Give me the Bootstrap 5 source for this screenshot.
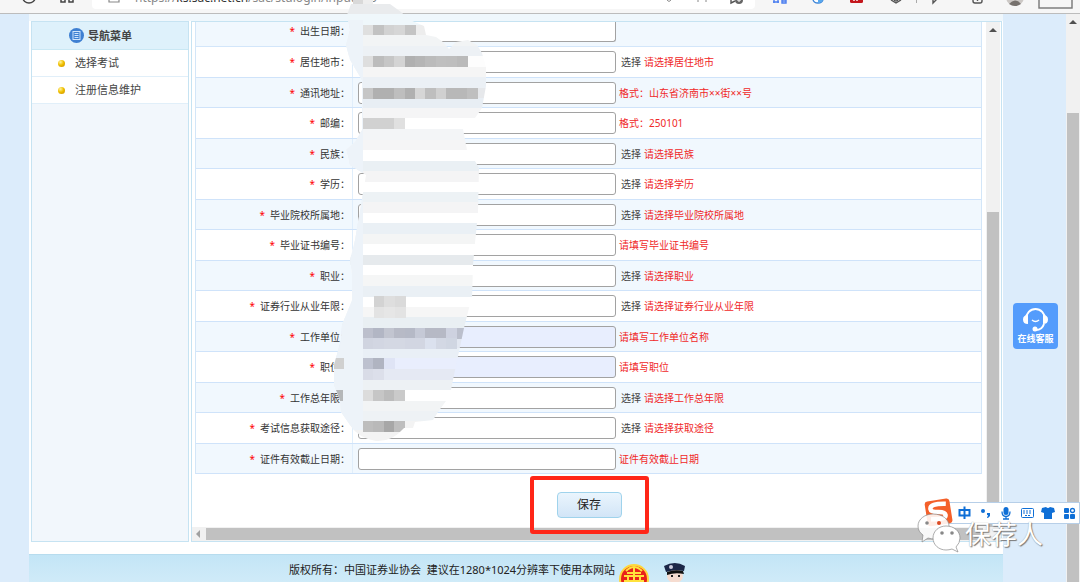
<!DOCTYPE html>
<html lang="zh-CN">
<head>
<meta charset="utf-8">
<meta name="viewport" content="width=device-width, initial-scale=1">
<title>注册信息维护</title>
<link href="https://cdn.jsdelivr.net/npm/bootstrap@5.3.0/dist/css/bootstrap.min.css" rel="stylesheet">
<style>
body{font-family:"Noto Sans","Noto Sans CJK SC",sans-serif;font-size:10px;line-height:16px;color:#333;background:#dcecfb;overflow:hidden}
a{text-decoration:none}
.chrome-bar{height:14px;background:#f6f6f6;border-bottom:1px solid #bcbcbc}
.omnibox{margin-left:92px;margin-right:325px;height:9px;background:#fff;border-radius:0 0 4px 4px;color:#888;font-size:12px}
.omnibox span{line-height:16px;margin-left:43px;margin-top:-10px}
.omnibox b{font-weight:400;color:#333}
.chrome-icons{left:0;top:0}
.chrome-icons-end{right:0;top:0}
.site{margin-left:29px;margin-right:77px;background:#fff}
.panels{padding:7px 1px 0 2px;gap:2px;background:linear-gradient(#eff7fc 7px,#fff 7px)}
.side{width:158px;border:1px solid #c6e3f2;background:#f2f7fc;font-size:11px}
.side-head{height:28px;background:#def1fb;border-bottom:1px solid #c9e8f4;color:#444;padding-left:37px;gap:4px}
.side-link{height:27px;background:#fff;border-bottom:1px solid #e1eff9;color:#444;padding-left:26px;gap:10px}
.ball{width:7px;height:7px;border-radius:50%;background:radial-gradient(circle at 35% 30%,#fff3a0,#f0c000 45%,#c88a00)}
.work{border:1px solid #c6e3f2;background:#fff;min-width:0}
.sheet{margin:0 4px 0 3px;border:solid #d3e6f8;border-width:0 1px}
.line{height:30px;border-bottom:1px solid #cfe3fa;background:#fff}
.line:nth-child(even){height:31px}
.line:nth-child(odd){background:#f1f8fe}
.line:first-child{height:25px;border-color:#d3e6fa}
.line:first-child .field{height:20px;border-top:0;border-radius:0 0 3px 3px;margin-bottom:4px}
.line:first-child .caption{padding-bottom:6px}
.caption{width:157px;border-right:1px solid #e0eefb;padding-right:2px}
.star{color:#f00;margin-right:5px}
.field{width:258px;height:22px;margin-left:5px;border:1px solid #a2a2a2;border-radius:3px;background:#fff;padding:0 4px;font-size:10px}
.field.filled{background:#e8eefe}
.pick{color:#444;margin-left:5px}
.hint{color:#f02828;margin-left:3px}
.save-zone{padding:18px 0 9px}
.save{width:65px;height:26px;border:1px solid #9fd3ec;border-radius:4px;background:linear-gradient(#eaf5fd,#d2e5f7);font-size:12px;color:#222;padding:0}
.ring{inset:-16px -27px;border:4px solid #ff2618;border-radius:3px;pointer-events:none;z-index:2}
.vtrack,.otrack{width:14px;background:#f1f1f1}
.otrack{top:14px;right:0;bottom:0;padding:99px 1px 0}
.vtrack{padding:190px 1px 0;margin-right:1px}
.htrack{height:14px;background:#f1f1f1;padding:1px 18px 1px 14px}
.thumb{background:#c1c1c1}
.arrow-u{border:4px solid transparent;border-top:0;border-bottom:4px solid #505050;left:3px;top:6px}
.arrow-l{border:4px solid transparent;border-left:0;border-right:4px solid #a0a0a0;left:4px;top:3px}
.foot{margin-top:12px;height:100px;background:linear-gradient(#c3e5f6,#dff2fb 60px);border-top:1px solid #b7dcee;padding:7px 0 0 260px;font-size:11px;color:#222}
.mask{left:330px;top:0}
.help{right:22px;top:303px;width:45px;height:46px;border:0;border-radius:4px;background:#549cfc;color:#fff;font-size:9px;font-weight:700;line-height:12px}
.ime{right:0;top:502px;width:135px;height:22px;background:#fff;border:1px solid #b7cfe8}
.mark-name{left:965px;top:516px;font-size:26px;line-height:36px;color:#fff;text-shadow:1px 1px 1px #777,0 0 1px #999}
.overlay-svg{left:910px;top:490px}
</style>
</head>
<body>
<div class="position-relative vh-100 overflow-hidden">
  <header class="chrome-bar position-relative overflow-hidden">
    <div class="omnibox d-flex align-items-start"><span>https://<b>ks.sac.net.cn</b>/sac/stulogin/inputinfo</span></div>
    <svg class="chrome-icons position-absolute" width="130" height="13" fill="none" stroke="#444" stroke-width="1.5">
      <path d="M23 -2a6 5 0 0 0 12 0M61 -3v5h4v-5M69 -3v5h4v-5"/><path d="M109 -4v6h10v-6" stroke="#888" stroke-width="1.2"/>
    </svg>
    <svg class="chrome-icons-end position-absolute" width="420" height="13" fill="none" stroke="#555" stroke-width="1.4">
      <path d="M7 0q2 3 4 0M38 0v2M46 0v2" stroke="#888" stroke-width="1"/>
      <path d="M71 0v3l4-2"/><circle cx="79" cy="0" r="4" fill="#666" stroke="none"/><path d="M77 0h4M79 -2v4" stroke="#fff" stroke-width="1"/>
      <path d="M114 0v3M118 0v3M113 2h6M122 0v3h4v-3M122 1h4" stroke="#4a7df0"/>
      <path d="M153 -1a5 4 0 0 0 10 0" fill="#fff" stroke="#3c84d8"/><path d="M158 3a5 4 0 0 0 5-4h-5z" fill="#58a8ee" stroke="none"/>
      <rect x="190" y="-8" width="13" height="11" rx="1.500" fill="#c4161c" stroke="none"/><path d="M194 1v-2M197 1v-2h3" stroke="#fff"/>
      <path d="M231 0l5 3 5-3"/><circle cx="236" cy="-1" r="2"/><path d="M256.500 0v3" stroke="#aaa" stroke-width="1"/><path d="M273 -3v6l5-5"/>
      <rect x="313" y="-6" width="9" height="9" rx="2"/><path d="M317.500 -2v3"/>
      <circle cx="355" cy="-3" r="9" fill="#ccc8c5" stroke="none"/><path d="M349 4q6-7 12 0-6 4-12 0z" fill="#77726e" stroke="none"/>
      <rect x="379" y="-8" width="33" height="16" stroke="#777"/>
    </svg>
  </header>

  <div class="site">
    <div class="panels d-flex">
      <nav class="side flex-shrink-0">
        <div class="side-head d-flex align-items-center fw-bold">
          <svg width="15" height="15"><circle cx="7.500" cy="7.500" r="7.500" fill="#3f80d2"/><rect x="4" y="3.500" width="7" height="8" fill="none" stroke="#cfe4fb"/><path d="M5.500 5.500h4M5.500 7.500h4M5.500 9.500h4" stroke="#cfe4fb"/></svg>导航菜单
        </div>
        <a href="#" class="side-link d-flex align-items-center"><span class="ball"></span>选择考试</a>
        <a href="#" class="side-link d-flex align-items-center"><span class="ball"></span>注册信息维护</a>
      </nav>
      <main class="work flex-grow-1">
        <div class="d-flex">
          <form class="flex-grow-1">
            <div class="sheet" id="sheet"></div>
            <div class="save-zone d-flex justify-content-center">
              <div class="position-relative"><button type="button" class="save d-block">保存</button><span class="ring position-absolute"></span></div>
            </div>
          </form>
          <div class="vtrack position-relative d-flex"><i class="arrow-u position-absolute"></i><div class="thumb flex-grow-1"></div></div>
        </div>
        <div class="htrack position-relative d-flex"><i class="arrow-l position-absolute"></i><div class="thumb flex-grow-1"></div></div>
      </main>
    </div>
    <footer class="foot d-flex align-items-start">
      <span class="text-nowrap">版权所有：中国证券业协会&nbsp; 建议在1280*1024分辨率下使用本网站</span>
      <svg width="80" height="36" class="flex-shrink-0">
        <circle cx="19" cy="17" r="14" fill="#e9221a" stroke="#ffd83a" stroke-width="2"/><path d="M11 9q8-8 16 0M9 14h20M12 11h14M19 5v16M13 14v5M25 14v5M9 19h20" fill="none" stroke="#ffe23c" stroke-width="2"/>
        <ellipse cx="60" cy="14" rx="8" ry="7" fill="#f6dcd0"/><path d="M49 4q11-6 21 0l-1 5q-9-2-18 1z" fill="#1b2647"/><path d="M52 10q8-3 16-1l1 3q-9-2-17 1z" fill="#111"/><circle cx="56" cy="5" r="2" fill="#ccd"/><path d="M56 14h2M63 14h2" stroke="#222" stroke-width="2"/><path d="M49 26q10-10 22 0z" fill="#26345f"/>
      </svg>
    </footer>
  </div>

  <div class="otrack position-absolute d-flex"><i class="arrow-u position-absolute"></i><div class="thumb flex-grow-1"></div></div>

  <svg class="mask position-absolute" id="mask" width="160" height="450" viewBox="330 0 160 450" shape-rendering="crispEdges">
    <clipPath id="smear"><path d="M351 4H390L401 12 410 20 424 26 426 35 436 37 443 42 449 49 456 42 468 40 477 45 482 53 486 67 486 86 482 108 475 118 463 118 463 129 467 150 461 150V161H475L479 168 478 213 475 243 473 265 472 300 469 308 464 328 454 375 451 390 446 401 438 412 433 420 415 422 413 428 404 428Q392 442 376 441 358 438 350 425L341 412 340 400 334 385V365L341 340 342 325 352 300V275L350 260 355 240 361 205 366 175 350 165 346 150 355 142 362 130V80L350 60 346 45 350 30 347 15Z"/></clipPath>
    <g id="bands" clip-path="url(#smear)"></g>
    <path d="M353 0h10v4h-10z" fill="#d9d9d9"/><path d="M363 0h10v4h-10z" fill="#eee"/>
  </svg>

  <button type="button" class="help position-absolute d-flex flex-column align-items-center p-0 pt-1">
    <svg width="27" height="26" fill="none" stroke="#fff" stroke-width="2"><path d="M4 12a9.500 10 0 0 1 19 0M22 17q-2 6-8 6"/><path d="M6 8v9q-5 0-5-4.500T6 8zM21 8v9q5 0 5-4.500T21 8z" fill="#fff" stroke="none"/><path d="M10 13q3.500 3 7 0" stroke-width="1.500"/><circle cx="13" cy="22" r="2.500" fill="#fff" stroke="none"/></svg>
    <span class="text-nowrap">在线客服</span>
  </button>

  <div class="ime position-absolute"></div>
  <svg class="overlay-svg position-absolute" width="170" height="65" viewBox="910 490 170 65">
    <g transform="rotate(-9 938 512)"><rect x="926" y="500" width="25" height="25" rx="3" fill="#f4602a"/><path d="M947 505q-16-3-16 3 0 3 7 4t7 4q0 5-15 2" fill="none" stroke="#fff" stroke-width="4.500"/></g>
    <g fill="none" stroke="#0f6fd6" stroke-width="2"><path d="M959.500 510h10v5.500h-10zM964.500 506.500v12.500"/></g>
    <g fill="#0f6fd6"><circle cx="983" cy="511" r="2"/><path d="M987 513h3v3l-2 2h-1l1-3h-1z"/>
      <rect x="1003.500" y="507" width="5" height="8" rx="2.500"/><path d="M1002 511.500q0 5 4 5t4-5M1006 516v3M1003 519h6" fill="none" stroke="#0f6fd6" stroke-width="1.300"/>
      <path d="M1042 508l4-1q2 2 4 0l4 1 1 4-3 1v6h-8v-6l-3-1z"/>
      <rect x="1064" y="508" width="5" height="5" rx="1"/><rect x="1064" y="514" width="5" height="5" rx="1"/><rect x="1070" y="514" width="5" height="5" rx="1"/><circle cx="1072.500" cy="510.500" r="2" fill="none" stroke="#0f6fd6" stroke-width="1.300"/></g>
    <rect x="1021.500" y="508.500" width="12" height="9" rx="1" fill="none" stroke="#0f6fd6"/><path d="M1023 511h9M1023 513h9M1025 515.500h5" stroke="#0f6fd6" stroke-dasharray="2 1"/>
    <g stroke="#8a8a8a" stroke-width=".7"><path d="M933 514c-8 0-15 5-15 12 0 4 2 7 5 9l-1 7 6-4q3 1 7 1c8 0 14-6 14-13s-7-12-16-12z" fill="#fff" fill-opacity=".88"/><path d="M946 526c-7 0-13 5-13 12s6 12 13 12q3 0 6-1l6 3-2-5q4-4 4-9c0-7-6-12-14-12z" fill="#fff"/></g>
    <g fill="#888"><circle cx="927" cy="523" r="1.800"/><circle cx="942" cy="533" r="1.800"/><circle cx="952" cy="533" r="1.800"/></g><circle cx="939" cy="523" r="2" fill="#dc4a22"/>
  </svg>
  <span class="mark-name position-absolute text-nowrap">保荐人</span>
</div>
<script src="https://cdn.jsdelivr.net/npm/bootstrap@5.3.0/dist/js/bootstrap.bundle.min.js"></script>
<script>
// label, has a picker link, hint, has a value
const rows = [
  ['出生日期', 0, ''], ['居住地市', 1, '请选择居住地市'], ['通讯地址', 0, '格式：山东省济南市××街××号'],
  ['邮编', 0, '格式：250101'], ['民族', 1, '请选择民族'], ['学历', 1, '请选择学历'],
  ['毕业院校所属地', 1, '请选择毕业院校所属地'], ['毕业证书编号', 0, '请填写毕业证书编号'], ['职业', 1, '请选择职业'],
  ['证券行业从业年限', 1, '请选择证券行业从业年限'], ['工作单位', 0, '请填写工作单位名称', 1], ['职位', 0, '请填写职位', 1],
  ['工作总年限', 1, '请选择工作总年限'], ['考试信息获取途径', 1, '请选择获取途径'], ['证件有效截止日期', 0, '证件有效截止日期']
];
document.getElementById('sheet').innerHTML = rows.map(([name, pick, hint, filled], i) =>
  `<div class="line d-flex align-items-center text-nowrap">
    <label for="f${i}" class="caption h-100 d-flex align-items-center justify-content-end flex-shrink-0"><span class="star">*</span>${name}：</label>
    <input id="f${i}" type="text" class="field flex-shrink-0${filled ? ' filled' : ''}">
    ${pick ? '<a href="#" class="pick">选择</a>' : ''}<span class="hint">${hint}</span>
  </div>`).join('');

// blurred bands over the private values: top, bottom, colour
const bands = [[4,14,'#e9ebed'],[14,25,'#eff7fb'],[25,35,'#ededed'],[35,46,'#f2f4f5'],[46,56,'#edf1f5'],[56,67,'#fdfdfd'],[67,77,'#f5f5f5'],
  [77,88,'#ebf0f5'],[88,98,'#e6e8eb'],[98,108,'#e8eef4'],[108,118,'#f5f5f6'],[118,129,'#fff'],[129,140,'#f3f5f7'],[140,150,'#f5f5f6'],
  [150,161,'#fff'],[161,171,'#eaf0f4'],[171,182,'#f4f4f5'],[182,192,'#fff'],[192,202,'#edf2f5'],[202,213,'#f4f4f5'],[213,223,'#fff'],
  [223,234,'#eaf0f5'],[234,244,'#f4f5f5'],[244,255,'#fff'],[255,265,'#e6eaed'],[265,275,'#fff'],[275,286,'#f5f6f6'],[286,297,'#eaf0f5'],
  [297,307,'#fff'],[307,317,'#f6f6f6'],[317,328,'#e9eff3'],[328,338,'#e4e9f8'],[338,348,'#e2e7f1'],[348,358,'#e9eff6'],[358,369,'#e9eefd'],
  [369,380,'#e5e9f3'],[380,390,'#edf1f4'],[390,401,'#fff'],[401,411,'#f2f4f5'],[411,421,'#eef2f5'],[421,442,'#f3f3f3']];
// mosaic cells: top, first column, greys
const cells = [[25,363,'dfdfdf c2c2c2 d2d2d2 d6d6d6 c4c4c4'],[56,363,'dedede bcbcbc c6c6c6 d4d4d4 b0b0b0 b5b5b5 bbbbbb bfbfbf bebebe bababa'],
  [88,363,'c6c6c6 b0b0b0 b0b0b0 bebebe b0b0b0 d6d6d6 bebebe d0d0d0 b8b8b8 b8b8b8 bfbfbf'],[118,363,'d1d1d1 d1d1d1 d1d1d1 e0e0e0'],
  [296,374,'d3d3d3 dedede dadada'],[307,374,'e3e3e3 e6e6e6 e3e3e3'],
  [328,363,'bcbfcc b2b6c4 c2c5d0 b7bac6 b5b9c6 c5c9d6 b6b9c5 b6b9c5 ced2e0 bbbfcc'],[338,363,'d0d4e0 d2d6e2 d4d8e3 d4d8e3 d2d6e2 d2d6e2 dbe1ee d3d8e4 d0d6e2'],
  [358,363,'bdc1cf b0b4c1 dfe4f5'],[369,363,'d9dce7 dcdfea'],[390,363,'dcdcdc c6c6c6 bcbcbc cacaca'],[421,363,'bdbdbd b9b9b9 a7a7a7 bebebe'],
  [358,333,'d0d0d0'],[390,332,'b5b7b9']];
const r = (x, y, w, h, c) => `<rect x="${x}" y="${y}" width="${w}" height="${h}" fill="${c}"/>`;
document.getElementById('bands').innerHTML =
  bands.map(([a, b, c]) => r(330, a, 160, b - a, c)).join('') + r(330, 20, 33, 410, '#edf3f9') +
  cells.map(([y, x, list]) => list.split(' ').map((c, i) => r(Math.round(x + i * 10.4), y, 11, y === 25 ? 10 : 11, '#' + c)).join('')).join('');
</script>
</body>
</html>
